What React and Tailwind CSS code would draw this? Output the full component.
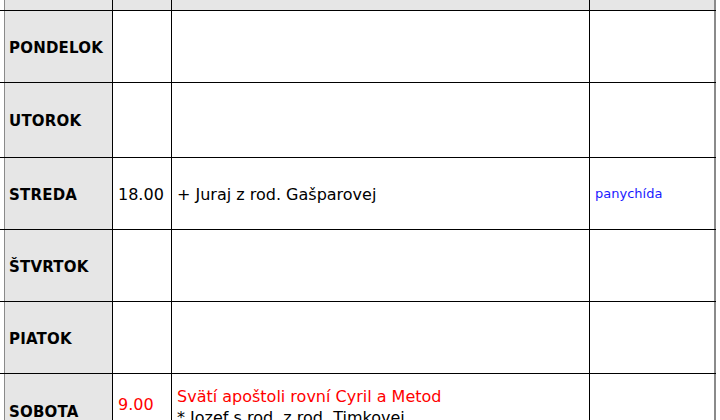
import React from 'react';

const font = { fontFamily: '"DejaVu Sans", "Liberation Sans", sans-serif' };

const rows = [
  { day: 'PONDELOK', h: 'h-[72px]' },
  { day: 'UTOROK', h: 'h-[75px]' },
  { day: 'STREDA', h: 'h-[72px]', time: '18.00', text: '+ Juraj z rod. Gašparovej', note: 'panychída' },
  { day: 'ŠTVRTOK', h: 'h-[72px]' },
  { day: 'PIATOK', h: 'h-[72px]' },
];

const dayCell =
  'flex items-center pl-[9px] bg-[#e6e6e6] shadow-[inset_4px_0_0_#fff,inset_5px_0_0_#8a8a8a] border-r border-black text-[15px] font-bold text-black tracking-[0.2px]';

const Row = ({ day, h, time, text, note }) => (
  <div className={`grid grid-cols-[113px_59px_418px_126px] border-b border-black ${h}`}>
    <div className={`${dayCell} pt-[3px]`}>{day}</div>
    <div className="flex items-center pl-[5px] pt-[2px] border-r border-black text-[16px] text-black">{time}</div>
    <div className="flex items-center pl-[5px] pt-[2px] border-r border-black text-[16px] text-black">{text}</div>
    <div className="flex items-center pl-[5px] border-r-2 border-[#8a8a8a] text-[13px] font-medium text-[#1a1aff]">{note}</div>
  </div>
);

export default function App() {
  return (
    <div className="w-[720px] h-[420px] overflow-hidden bg-white" style={font}>
      <div className="w-[716px]">
        <div className="grid grid-cols-[113px_59px_418px_126px] h-[11px] border-b border-black bg-[#e6e6e6]">
          <div className="shadow-[inset_4px_0_0_#fff,inset_5px_0_0_#8a8a8a] border-r border-black" />
          <div className="border-r border-black" />
          <div className="border-r border-black" />
          <div className="border-r-2 border-[#8a8a8a]" />
        </div>
        {rows.map((r) => (
          <Row key={r.day} {...r} />
        ))}
        <div className="grid grid-cols-[113px_59px_418px_126px] h-[72px]">
          <div className={`${dayCell} pt-[4px]`}>SOBOTA</div>
          <div className="pl-[5px] pt-[19px] border-r border-black text-[16px] text-[#ff0000]">9.00</div>
          <div className="pl-[5px] pt-[12px] border-r border-black text-[16px] leading-[21px]">
            <div className="text-[#ff0000]">Svätí apoštoli rovní Cyril a Metod</div>
            <div className="text-black">* Jozef s rod. z rod. Timkovej</div>
          </div>
          <div className="border-r-2 border-[#8a8a8a]" />
        </div>
      </div>
    </div>
  );
}
